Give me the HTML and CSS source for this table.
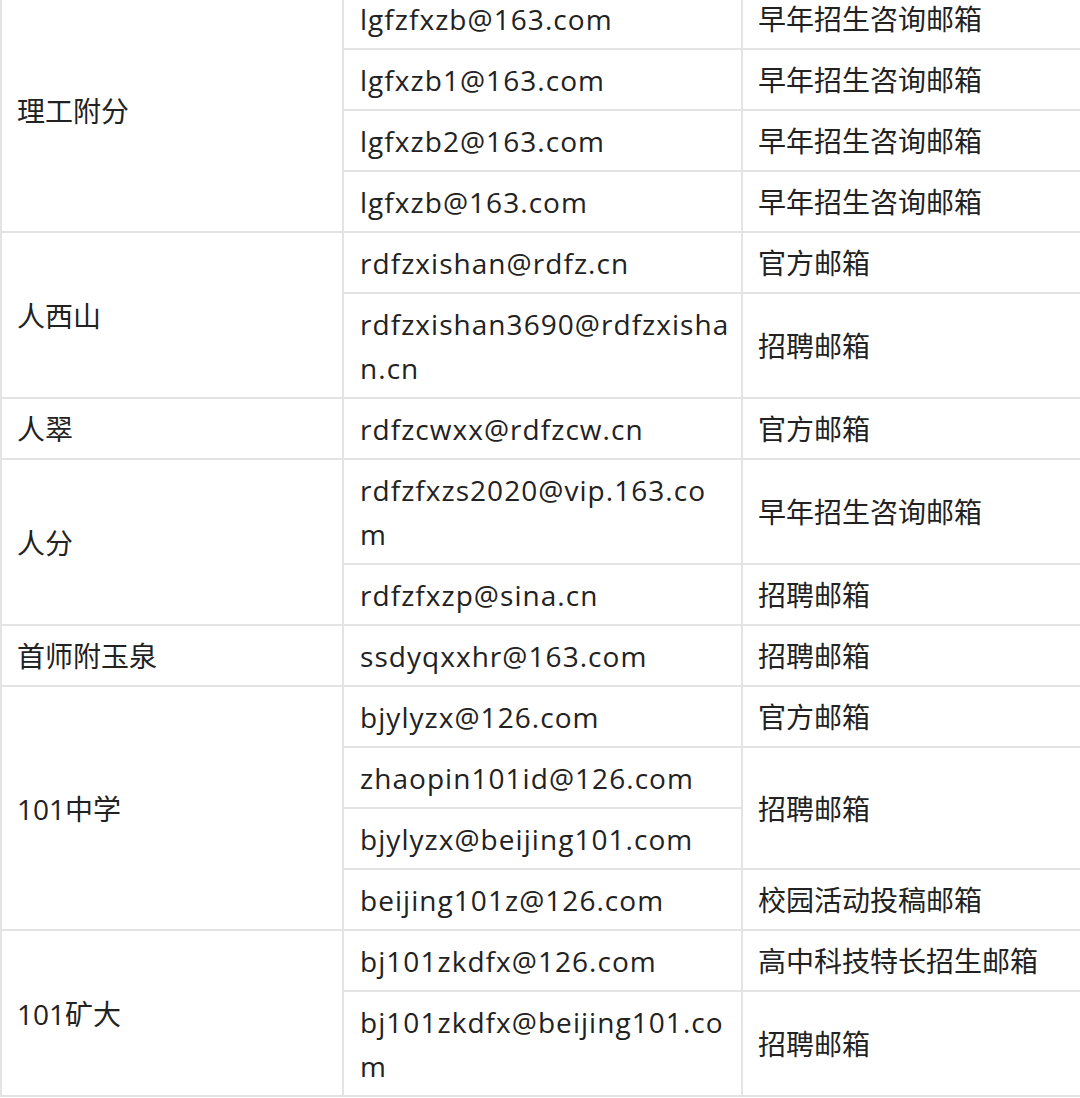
FILE: index.html
```html
<!DOCTYPE html>
<html lang="zh-CN">
<head>
<meta charset="utf-8">
<link rel="stylesheet" href="styles.css">
</head>
<body>
<div class="wrap">
<table class="mail-table">
<colgroup><col class="c1"><col class="c2"><col class="c3"></colgroup>
<tbody>
<tr><td rowspan="4">理工附分</td><td class="mail">lgfzfxzb@163.com</td><td>早年招生咨询邮箱</td></tr>
<tr><td class="mail">lgfxzb1@163.com</td><td>早年招生咨询邮箱</td></tr>
<tr><td class="mail">lgfxzb2@163.com</td><td>早年招生咨询邮箱</td></tr>
<tr><td class="mail">lgfxzb@163.com</td><td>早年招生咨询邮箱</td></tr>
<tr><td rowspan="2">人西山</td><td class="mail">rdfzxishan@rdfz.cn</td><td>官方邮箱</td></tr>
<tr><td class="mail">rdfzxishan3690@rdfzxishan.cn</td><td>招聘邮箱</td></tr>
<tr><td>人翠</td><td class="mail">rdfzcwxx@rdfzcw.cn</td><td>官方邮箱</td></tr>
<tr><td rowspan="2">人分</td><td class="mail">rdfzfxzs2020@vip.163.com</td><td>早年招生咨询邮箱</td></tr>
<tr><td class="mail">rdfzfxzp@sina.cn</td><td>招聘邮箱</td></tr>
<tr><td>首师附玉泉</td><td class="mail">ssdyqxxhr@163.com</td><td>招聘邮箱</td></tr>
<tr><td rowspan="4">101中学</td><td class="mail">bjylyzx@126.com</td><td>官方邮箱</td></tr>
<tr><td class="mail">zhaopin101id@126.com</td><td rowspan="2">招聘邮箱</td></tr>
<tr><td class="mail">bjylyzx@beijing101.com</td></tr>
<tr><td class="mail">beijing101z@126.com</td><td>校园活动投稿邮箱</td></tr>
<tr><td rowspan="2">101矿大</td><td class="mail">bj101zkdfx@126.com</td><td>高中科技特长招生邮箱</td></tr>
<tr><td class="mail">bj101zkdfx@beijing101.com</td><td>招聘邮箱</td></tr>
</tbody>
</table>
</div>
</body>
</html>
```
FILE: styles.css
```css
html, body {
  margin: 0;
  padding: 0;
  background: #fff;
}
.wrap {
  width: 1080px;
  height: 1098px;
  overflow: hidden;
}
.mail-table {
  margin-top: -13px;
  width: 1084px;
  border-collapse: collapse;
  table-layout: fixed;
  font-family: "Open Sans", "Noto Sans CJK SC", sans-serif;
  font-size: 28px;
  line-height: 44px;
  color: #222;
}
.c1 { width: 342px; }
.c2 { width: 399px; }
.c3 { width: 343px; }
.mail-table td {
  border: 2px solid #e3e3e3;
  padding: 8px 15px 7px;
  vertical-align: middle;
  word-break: break-all;
  text-align: left;
}
.mail-table td.mail {
  letter-spacing: 1.05px;
  padding-left: 16px;
  padding-right: 8px;
}
```
